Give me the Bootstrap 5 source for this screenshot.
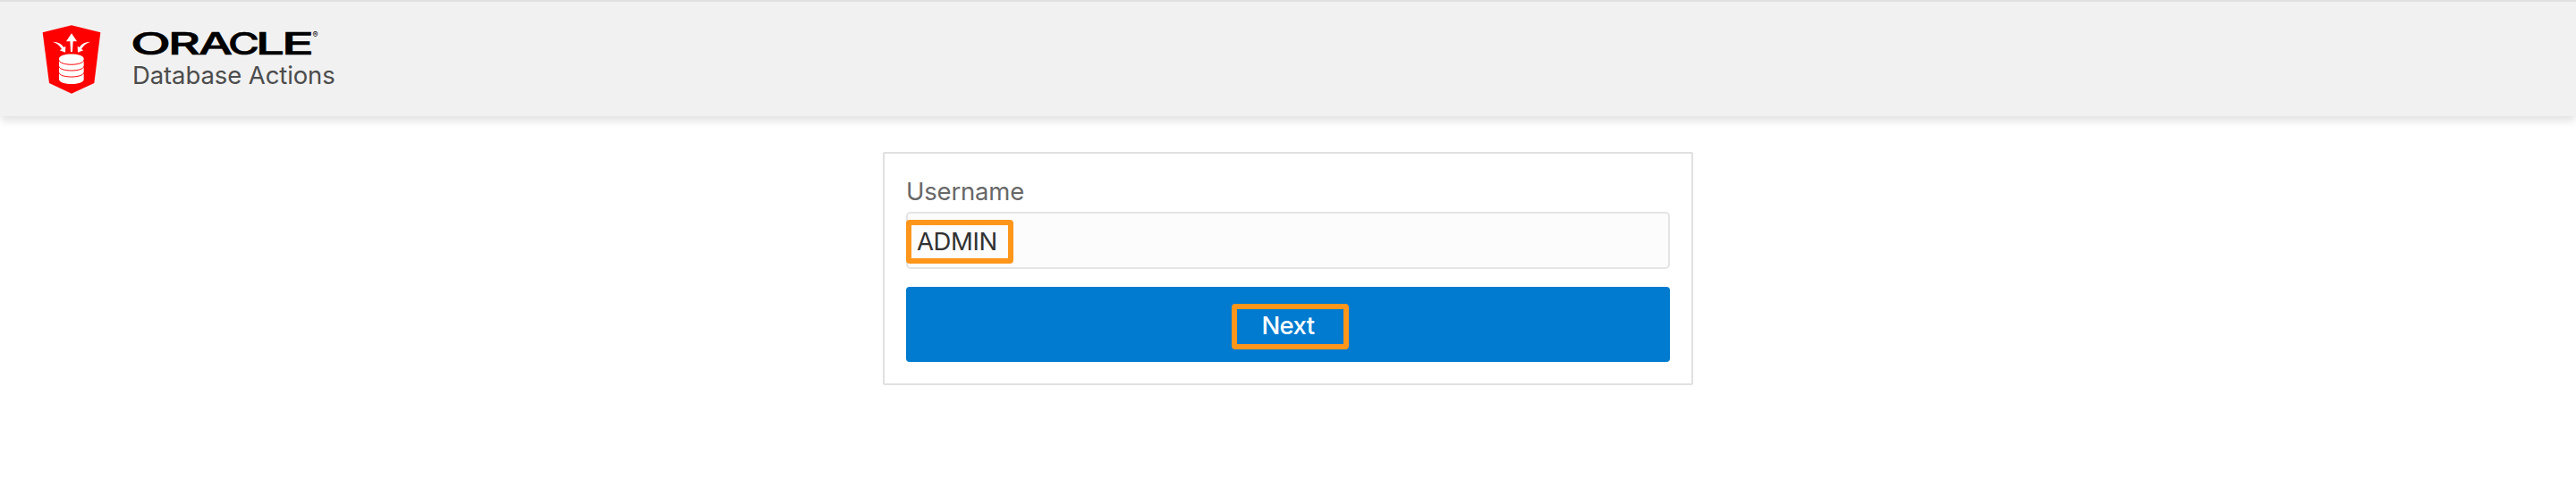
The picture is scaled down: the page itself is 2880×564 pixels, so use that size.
<!DOCTYPE html>
<html lang="en">
<head>
<meta charset="utf-8">
<meta name="viewport" content="width=device-width, initial-scale=1">
<title>Database Actions</title>
<link rel="stylesheet" href="https://cdn.jsdelivr.net/npm/bootstrap@5.3.0/dist/css/bootstrap.min.css">
<style>
body{font-family:Inter,"Liberation Sans",sans-serif;font-size:27.5px;color:#313131;background:#fff}
.app-header{height:130px;background:#f1f1f1;border-top:2px solid #e0e0e0;box-shadow:0 6px 9px -1px rgba(0,0,0,.12);padding:26px 0 0 47px}
.shield{width:66px;height:77px;display:block}
.brand-text{margin-left:34px}
.wordmark{width:220px;height:36px;display:block;overflow:visible}
.product{color:#4c4c4c;line-height:34px;white-space:nowrap;margin:3px 0 0 1px;letter-spacing:-.1px}
.login-box{width:906px;height:261px;margin:40px auto 0;border:2px solid #e0e0e0;border-radius:2px;padding:25px 24px 0}
.login-box label{display:block;line-height:34px;color:#686868;letter-spacing:-.2px;margin-bottom:6px}
.login-input{height:64px;background:#fcfcfc;border:2px solid #e4e4e4;border-radius:5px}
.login-input input{width:100%;height:60px;border:0;background:none;padding:2px 10px 0;color:#313131;font-size:27.5px;letter-spacing:-.4px;outline:0}
.hl{border:6px solid #ff961c;border-radius:4px;pointer-events:none}
.hl-user{left:-2px;top:7px;width:120px;height:49px}
.btn-next{height:84px;margin-top:20px;background:#007bcf;color:#fff;border:0;border-radius:4px;font-size:27.5px;font-weight:500;letter-spacing:-.6px;line-height:86px;padding:0}
.btn-next:hover{background:#007bcf;color:#fff}
.hl-next{left:364px;top:19px;width:131px;height:51px}
</style>
</head>
<body>
<header class="app-header d-flex align-items-start">
  <svg class="shield" viewBox="51 52 198 231" aria-hidden="true">
    <path fill="#f00" d="M150 53 247 77 226 247 150 282 75 247 53 77Z"/>
    <g fill="#fff">
      <path d="M150 80 168 107H155L153 142H147L145 107H132Z"/>
      <path d="M87 108Q114 109 124 127L130 123 129 144 110 137 117 133Q108 115 87 108Z"/>
      <path d="M213 108Q186 109 176 127L170 123 171 144 190 137 183 133Q192 115 213 108Z"/>
      <path d="M108 165C108 144 191 144 191 165V234C191 255 108 255 108 234Z"/>
    </g>
    <path fill="none" stroke="#f00" stroke-width="3" d="M107 169C110 190 189 190 192 169M107 190C110 210 189 210 192 190M107 211C110 231 189 231 192 211"/>
  </svg>
  <div class="brand-text">
    <svg class="wordmark" viewBox="0 0 220 36" role="img" aria-label="ORACLE">
      <text y="33.3" font-family="Inter,sans-serif" font-size="34.5" font-weight="500" fill="#000" stroke="#000" stroke-width=".7"><tspan x="-1" textLength="45" lengthAdjust="spacingAndGlyphs">O</tspan><tspan x="41" textLength="36" lengthAdjust="spacingAndGlyphs">R</tspan><tspan x="75" textLength="38" lengthAdjust="spacingAndGlyphs">A</tspan><tspan x="108" textLength="35" lengthAdjust="spacingAndGlyphs">C</tspan><tspan x="139" textLength="32" lengthAdjust="spacingAndGlyphs">L</tspan><tspan x="168" textLength="36" lengthAdjust="spacingAndGlyphs">E</tspan></text>
      <text x="202.5" y="14" font-family="Inter,sans-serif" font-size="9" fill="#000">®</text>
    </svg>
    <div class="product">Database Actions</div>
  </div>
</header>
<main>
  <form class="login-box" onsubmit="return false">
    <label for="username">Username</label>
    <div class="login-input position-relative">
      <input id="username" type="text" value="ADMIN">
      <span class="hl hl-user position-absolute"></span>
    </div>
    <button class="btn btn-next w-100 d-block position-relative" type="button">Next<span class="hl hl-next position-absolute"></span></button>
  </form>
</main>
<script src="https://cdn.jsdelivr.net/npm/bootstrap@5.3.0/dist/js/bootstrap.bundle.min.js"></script>
</body>
</html>
